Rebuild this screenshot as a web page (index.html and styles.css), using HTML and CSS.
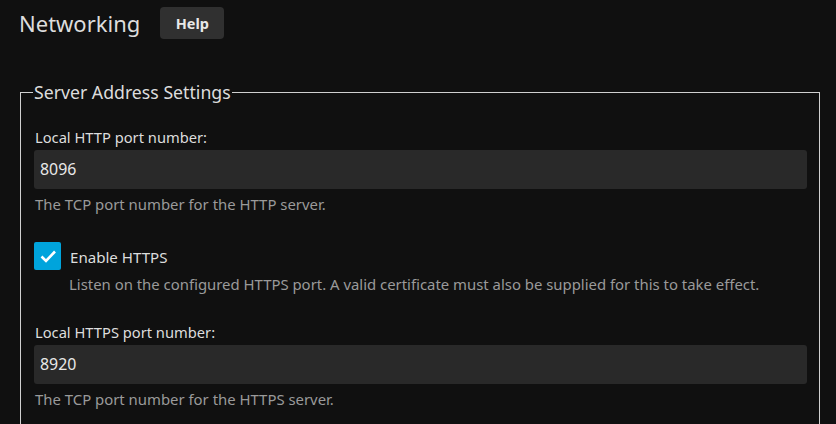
FILE: index.html
```html
<!DOCTYPE html>
<html>
<head>
<meta charset="utf-8">
<link rel="stylesheet" href="styles.css">
</head>
<body>
<div class="page">
  <div class="header">
    <h2 class="title">Networking</h2>
    <button class="help">Help</button>
  </div>
  <fieldset class="box">
    <legend class="legend">Server Address Settings</legend>
    <div class="field">
      <label class="label">Local HTTP port number:</label>
      <div class="input">8096</div>
      <div class="desc">The TCP port number for the HTTP server.</div>
    </div>
    <div class="check-field">
      <div class="check-row">
        <span class="checkbox">
          <svg width="20" height="20" viewBox="0 0 20 20"><polyline points="3.5,10.5 8,15 17,5.5" fill="none" stroke="#fff" stroke-width="2.6"/></svg>
        </span>
        <span class="check-label">Enable HTTPS</span>
      </div>
      <div class="desc check-desc">Listen on the configured HTTPS port. A valid certificate must also be supplied for this to take effect.</div>
    </div>
    <div class="field field2">
      <label class="label">Local HTTPS port number:</label>
      <div class="input">8920</div>
      <div class="desc">The TCP port number for the HTTPS server.</div>
    </div>
  </fieldset>
</div>
</body>
</html>
```
FILE: styles.css
```css
html, body {
  margin: 0;
  padding: 0;
  background: #101010;
  color: #dddddd;
  font-family: "Noto Sans", "Open Sans", sans-serif;
  overflow: hidden;
}
.page {
  padding: 0 16px 0 20px;
  width: 800px;
}
.header {
  display: flex;
  align-items: center;
  height: 46px;
}
.title {
  margin: 0 0 0 -1px;
  font-size: 22px;
  font-weight: 400;
  line-height: 46px;
  color: #dddddd;
}
.help {
  margin-left: 20px;
  width: 64px;
  height: 32px;
  border: 0;
  border-radius: 4px;
  background: #303030;
  color: #e8e8e8;
  font-family: "Noto Sans", sans-serif;
  font-weight: 700;
  font-size: 14.5px;
  padding: 0;
}
.box {
  margin: 35px 0 0 0;
  border: 1px solid #d0d0d0;
  padding: 24px 12px 30px 13px;
  width: 773px;
}
.legend {
  padding: 0 1px;
  font-size: 17.7px;
  line-height: 22px;
  color: #dddddd;
  margin-left: -1px;
}
.field {
  display: flex;
  flex-direction: column;
}
.label {
  font-size: 14.7px;
  line-height: 20px;
  margin-left: 1px;
  margin-bottom: 3px;
}
.input {
  height: 39px;
  line-height: 39px;
  background: #292929;
  border-radius: 3px;
  padding-left: 6px;
  font-size: 15.9px;
  color: #e8e8e8;
}
.desc {
  font-size: 14.9px;
  line-height: 18px;
  color: #9a9a9a;
  margin-top: 6px;
  margin-left: 1px;
}
.check-field {
  margin-top: 28px;
  display: flex;
  flex-direction: column;
}
.check-row {
  display: flex;
  align-items: center;
  height: 29px;
}
.checkbox {
  width: 27px;
  height: 28px;
  background: #00a4dc;
  border-radius: 2px;
  display: flex;
  align-items: center;
  justify-content: center;
}
.check-label {
  margin-left: 9px;
  font-size: 15.1px;
  margin-top: 3px;
}
.check-desc {
  margin-left: 35px;
  margin-top: 5px;
}
.field2 {
  margin-top: 29px;
}
```
